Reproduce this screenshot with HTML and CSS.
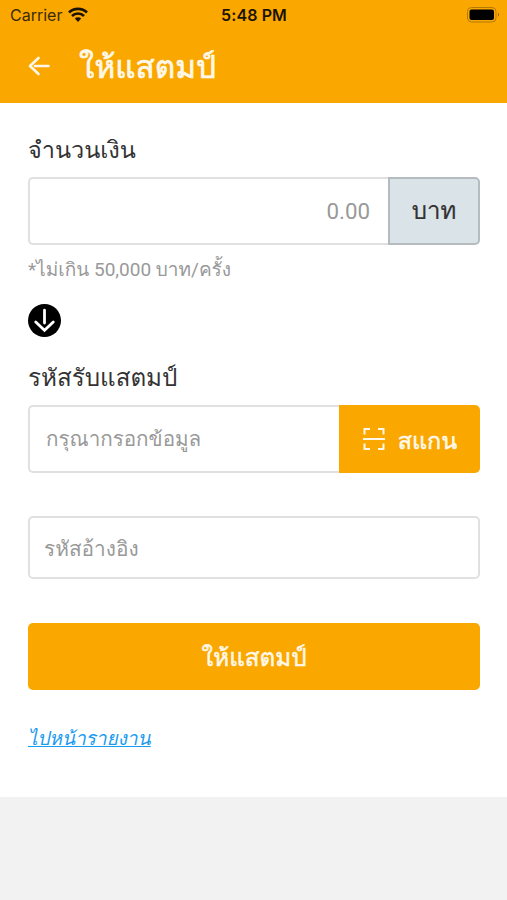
FILE: index.html
```html
<!DOCTYPE html>
<html lang="th"><head><meta charset="utf-8"><title>ให้แสตมป์</title><link rel="stylesheet" href="styles.css"></head>
<body>
<header class="header">
<div class="status"><span class="carrier">Carrier <svg class="wifi" width="20" height="15" viewBox="0 0 20 15"><path d="M1 5.500a13 13 0 0 1 18 0M4 9a8.500 8.500 0 0 1 12 0" fill="none" stroke="#1c1402" stroke-width="2.700"/><path d="M6.800 11.500a4.600 4.600 0 0 1 6.400 0L10 15z" fill="#1c1402"/></svg></span><span class="time">5:48 PM</span>
<svg class="battery" width="33" height="16" viewBox="0 0 33 16"><rect x=".5" y=".5" width="28.500" height="14.500" rx="4" fill="none" stroke="#b37a08"/><rect x="2.500" y="2.500" width="24.500" height="10.500" rx="2" fill="#000"/><path d="M31 5.500q2 2.500 0 4z" fill="#8a5d08"/></svg></div>
<div class="bar"><svg class="back" width="22" height="20" viewBox="0 0 22 20"><path d="M20.500 10H7M10.500 2L2 10l8.500 8" fill="none" stroke="#fff8e8" stroke-width="2.600" stroke-linecap="round" stroke-linejoin="round"/></svg><h1 class="title">ให้แสตมป์</h1></div>
</header>
<main class="content">
<label class="label">จำนวนเงิน</label>
<div class="group"><div class="field amount">0.00</div><div class="unit">บาท</div></div>
<p class="hint">*ไม่เกิน 50,000 บาท/ครั้ง</p>
<svg class="down" width="33" height="33" viewBox="0 0 32 32"><circle cx="16" cy="16" r="16"/><path d="M16 6v12.500M7.500 17.500L16 25.500l8.500-8" fill="none" stroke="#fff" stroke-width="2.700" stroke-linecap="round"/></svg>
<label class="label second">รหัสรับแสตมป์</label>
<div class="group"><div class="field code">กรุณากรอกข้อมูล</div><button class="scan"><svg width="24" height="24" viewBox="0 0 24 24"><path d="M2.500 7.500V2H8M16 2h5.500v5.500M21.500 16.500V22H16M8 22H2.500v-5.500M1 12h22" fill="none" stroke="#fff8e8" stroke-width="2"/></svg><span>สแกน</span></button></div>
<div class="reference">รหัสอ้างอิง</div>
<button class="submit">ให้แสตมป์</button>
<a class="link" href="#">ไปหน้ารายงาน</a>
</main>
</body></html>
```
FILE: styles.css
```css
*{box-sizing:border-box}
body{margin:0;height:900px;background:#f2f2f2;font-family:Roboto,"Loma","Garuda","Waree",sans-serif;color:#333}
.header{height:103px;background:#faa700}
.status{height:30px;display:grid;grid-template-columns:1fr auto 1fr;align-items:center;padding:0 7px 0 10px;font:16px Inter,sans-serif;color:#3a2b08}
.carrier{display:flex;align-items:center;gap:6px}
.wifi{margin-top:-1px}
.time{font-weight:600;letter-spacing:.1px;color:#1c1402;position:relative;left:-1px}
.battery{justify-self:end;margin-top:-1px}
.bar{height:73px;display:flex;align-items:center;padding:0 0 2px 28px;gap:29px}
.title{margin:0;color:#fff8e8;font-size:31.500px;font-weight:500;line-height:1;-webkit-text-stroke:.7px currentColor;padding-top:4px}
.content{height:694px;background:#fff;padding:32px 27px 0 28px;display:flex;flex-direction:column}
.label{height:42px;font-size:23.500px;line-height:31px;flex-shrink:0}
.group{display:flex;height:68px;flex-shrink:0}
.field{flex:1;border:2px solid #e0e0e0;border-right:0;border-radius:5px 0 0 5px;display:flex;align-items:center;color:#999}
.amount{justify-content:flex-end;padding-right:18px;font-size:22.300px}
.unit{width:92px;border:2px solid #b4bcc0;border-radius:0 5px 5px 0;background:#dae3e7;display:grid;place-items:center;font-size:24px;padding-bottom:1px;-webkit-text-stroke:.2px currentColor}
.hint{margin:12px 0 0;height:47px;font-size:19px;line-height:26px;color:#999}
.down{flex-shrink:0}
.second{margin-top:26px;font-size:24.200px}
.code{padding:0 0 1px 16px;font-size:20.600px}
button{border:0;background:#faa700;color:#fff8e8;font-family:inherit;font-weight:500;padding:0;-webkit-text-stroke:.5px currentColor}
.scan{width:141px;border-radius:0 5px 5px 0;display:flex;align-items:center;justify-content:center;gap:12px;font-size:23.400px}
.scan span{padding-top:3px}
.reference{margin-top:43px;height:63px;flex-shrink:0;border:2px solid #e0e0e0;border-radius:5px;padding:1px 0 0 14px;display:flex;align-items:center;font-size:20.800px;color:#999}
.submit{margin-top:44px;height:67px;flex-shrink:0;border-radius:5px;font-size:24.200px;padding-top:2px}
.link{margin-top:36px;align-self:flex-start;font-size:19px;line-height:26px;font-style:italic;color:#1a9bf0}
```
